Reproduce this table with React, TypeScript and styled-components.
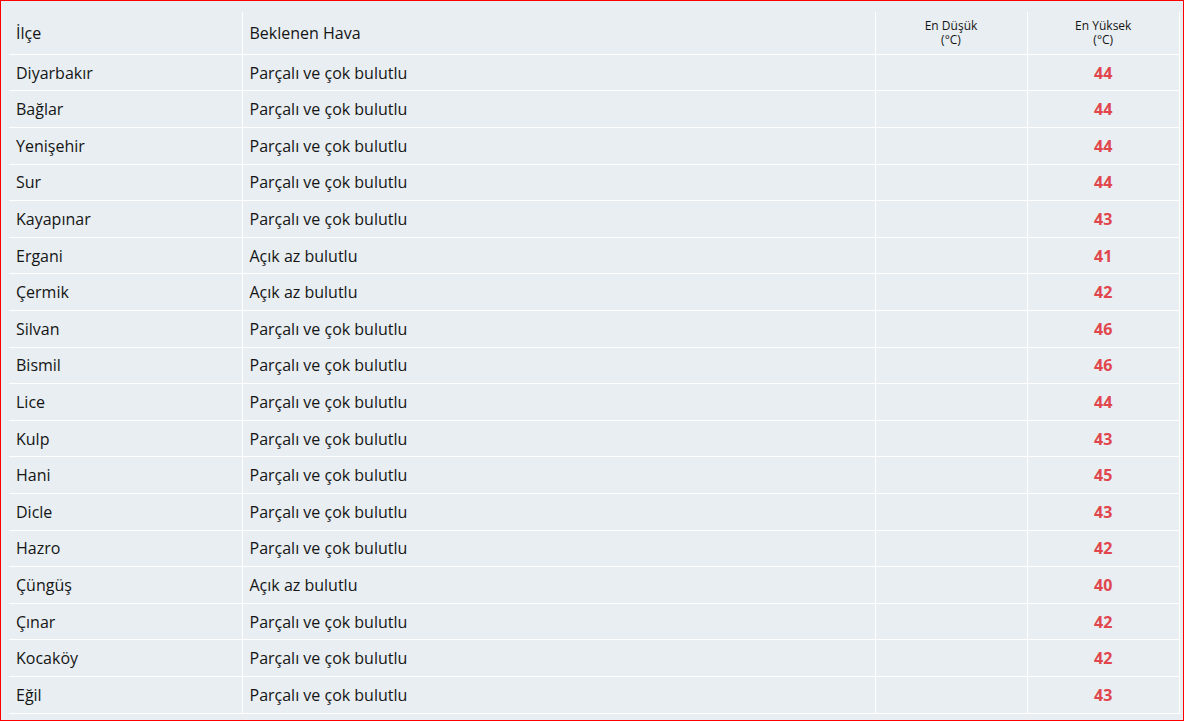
import styled, { createGlobalStyle } from 'styled-components';

type Row = { district: string; weather: string; low?: number; high: number };

const rows: Row[] = [
  { district: 'Diyarbakır', weather: 'Parçalı ve çok bulutlu', high: 44 },
  { district: 'Bağlar', weather: 'Parçalı ve çok bulutlu', high: 44 },
  { district: 'Yenişehir', weather: 'Parçalı ve çok bulutlu', high: 44 },
  { district: 'Sur', weather: 'Parçalı ve çok bulutlu', high: 44 },
  { district: 'Kayapınar', weather: 'Parçalı ve çok bulutlu', high: 43 },
  { district: 'Ergani', weather: 'Açık az bulutlu', high: 41 },
  { district: 'Çermik', weather: 'Açık az bulutlu', high: 42 },
  { district: 'Silvan', weather: 'Parçalı ve çok bulutlu', high: 46 },
  { district: 'Bismil', weather: 'Parçalı ve çok bulutlu', high: 46 },
  { district: 'Lice', weather: 'Parçalı ve çok bulutlu', high: 44 },
  { district: 'Kulp', weather: 'Parçalı ve çok bulutlu', high: 43 },
  { district: 'Hani', weather: 'Parçalı ve çok bulutlu', high: 45 },
  { district: 'Dicle', weather: 'Parçalı ve çok bulutlu', high: 43 },
  { district: 'Hazro', weather: 'Parçalı ve çok bulutlu', high: 42 },
  { district: 'Çüngüş', weather: 'Açık az bulutlu', high: 40 },
  { district: 'Çınar', weather: 'Parçalı ve çok bulutlu', high: 42 },
  { district: 'Kocaköy', weather: 'Parçalı ve çok bulutlu', high: 42 },
  { district: 'Eğil', weather: 'Parçalı ve çok bulutlu', high: 43 },
];

const GlobalStyle = createGlobalStyle`
  html, body {
    margin: 0;
    padding: 0;
    background: #e8eef2;
  }
  * {
    box-sizing: border-box;
  }
`;

const Frame = styled.div`
  width: 1184px;
  height: 721px;
  border: 1px solid #ff0000;
  background: #e8eef2;
  padding: 11px 3px 0 8px;
  font-family: 'Open Sans', 'Noto Sans', sans-serif;
  color: #151515;
  overflow: hidden;
`;

const Table = styled.table`
  width: 100%;
  border-collapse: collapse;
  table-layout: fixed;
`;

const HeadCell = styled.th<{ $center?: boolean; $w?: number }>`
  ${(p) => (p.$w ? `width: ${p.$w}px;` : '')}
  height: 42.4px;
  padding: 0 7px;
  font-weight: 400;
  text-align: ${(p) => (p.$center ? 'center' : 'left')};
  font-size: ${(p) => (p.$center ? '12px' : '16px')};
  line-height: ${(p) => (p.$center ? '14px' : '20px')};
  vertical-align: ${(p) => (p.$center ? 'top' : 'middle')};
  padding-top: ${(p) => (p.$center ? '7px' : '0')};
  border-right: 1px solid #ffffff;
  border-bottom: 1px solid #ffffff;
`;

const Cell = styled.td<{ $center?: boolean }>`
  height: 36.6px;
  padding: 0 7px;
  font-size: 16px;
  line-height: 20px;
  text-align: ${(p) => (p.$center ? 'center' : 'left')};
  border-right: 1px solid #ffffff;
  border-bottom: 1px solid #ffffff;
  white-space: nowrap;
`;

const Hot = styled.span`
  color: #e0464c;
  font-weight: 700;
`;

export default function App() {
  return (
    <>
      <GlobalStyle />
      <Frame>
        <Table>
          <thead>
            <tr>
              <HeadCell $w={233}>İlçe</HeadCell>
              <HeadCell $w={633}>Beklenen Hava</HeadCell>
              <HeadCell $w={152} $center>
                En Düşük
                <br />
                (°C)
              </HeadCell>
              <HeadCell $center>
                En Yüksek
                <br />
                (°C)
              </HeadCell>
            </tr>
          </thead>
          <tbody>
            {rows.map((r) => (
              <tr key={r.district}>
                <Cell>{r.district}</Cell>
                <Cell>{r.weather}</Cell>
                <Cell $center>{r.low ?? ''}</Cell>
                <Cell $center>
                  <Hot>{r.high}</Hot>
                </Cell>
              </tr>
            ))}
          </tbody>
        </Table>
      </Frame>
    </>
  );
}
